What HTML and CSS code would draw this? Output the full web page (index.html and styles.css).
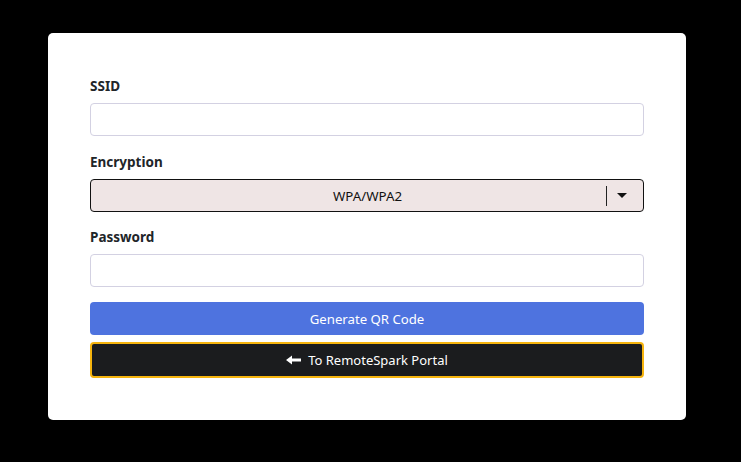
FILE: index.html
```html
<!DOCTYPE html>
<html>
<head>
<meta charset="utf-8">
<link rel="stylesheet" href="styles.css">
</head>
<body>
<div class="card">
  <div class="field">
    <label class="label">SSID</label>
    <input class="input" type="text">
  </div>
  <div class="field field-tight">
    <label class="label">Encryption</label>
    <div class="select">
      <span class="select-value">WPA/WPA2</span>
      <span class="select-sep"></span>
      <span class="select-caret"></span>
    </div>
  </div>
  <div class="field">
    <label class="label">Password</label>
    <input class="input" type="text">
  </div>
  <button class="btn btn-primary">Generate QR Code</button>
  <button class="btn btn-dark"><svg class="arrow" width="15" height="10" viewBox="0 0 15 10"><path d="M0 5 L6 0.5 V3.6 H15 V6.4 H6 V9.5 Z" fill="#fff"/></svg>To RemoteSpark Portal</button>
</div>
</body>
</html>
```
FILE: styles.css
```css
html, body { margin: 0; padding: 0; }
body {
  background: #000;
  font-family: "Noto Sans", "Open Sans", sans-serif;
  color: #212529;
  padding: 33px 55px 43px 48px;
}
.card {
  background: #fff;
  border-radius: 5px;
  width: 638px;
  box-sizing: border-box;
  padding: 42px 42px 42px 42px;
  display: flex;
  flex-direction: column;
}
.field { display: flex; flex-direction: column; margin-bottom: 15px; }
.field-tight { margin-bottom: 14px; }
.label {
  font-weight: 700;
  font-size: 13.5px;
  line-height: 20px;
  padding-top: 1px;
  margin-bottom: 7px;
  color: #212529;
}
.input {
  height: 33px;
  box-sizing: border-box;
  border: 1px solid #d3d1e2;
  border-radius: 4px;
  background: #fff;
  margin: 0;
  padding: 0 10px;
}
.select {
  height: 33px;
  box-sizing: border-box;
  border: 1px solid #111;
  border-radius: 4px;
  background: #efe5e5;
  display: flex;
  align-items: center;
  font-size: 13.3px;
  color: #111;
}
.select-value { flex: 1; text-align: center; padding-left: 38px; }
.select-sep { width: 1px; height: 20px; background: #222; margin-right: 10px; }
.select-caret {
  width: 0; height: 0;
  border-left: 5px solid transparent;
  border-right: 5px solid transparent;
  border-top: 5px solid #111;
  margin-right: 16px;
}
.btn {
  font-family: inherit;
  font-size: 13.2px;
  color: #fff;
  border-radius: 4px;
  cursor: pointer;
  display: flex;
  align-items: center;
  justify-content: center;
  box-sizing: border-box;
  width: 100%;
  padding: 0;
}
.btn-primary {
  background: #4e73df;
  border: none;
  height: 33px;
  margin-bottom: 7px;
}
.btn-dark {
  background: #1b1c1e;
  border: 2px solid #f6b40e;
  height: 36px;
  font-size: 13px;
}
.arrow { margin-right: 7px; }
```
